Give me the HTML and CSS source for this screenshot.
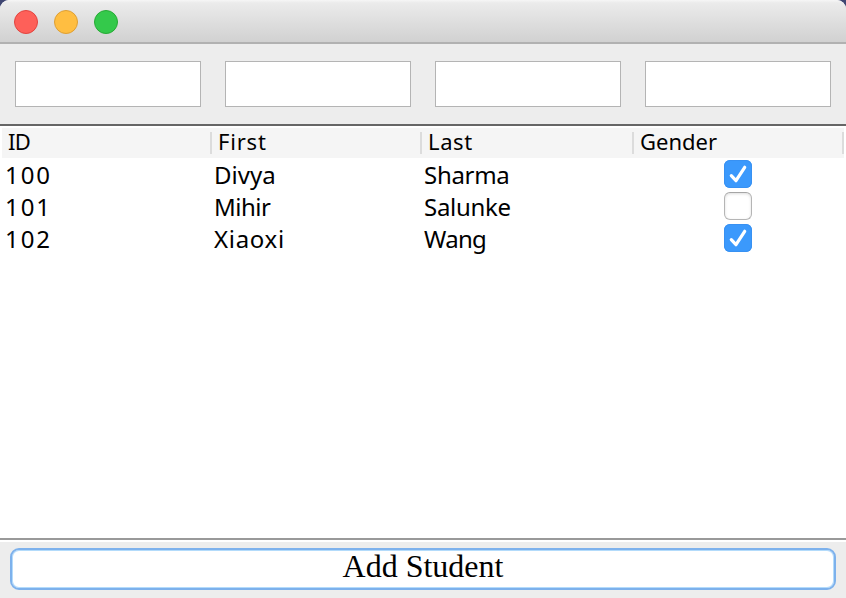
FILE: index.html
```html
<!DOCTYPE html>
<html lang="en">
<head>
<meta charset="utf-8">
<title>Students</title>
<link rel="stylesheet" href="styles.css">
</head>
<body>
<div class="window">
  <header class="titlebar">
    <span class="light close"></span>
    <span class="light minimize"></span>
    <span class="light zoom"></span>
  </header>
  <form class="fields">
    <input type="text"><input type="text"><input type="text"><input type="text">
  </form>
  <main class="table-pane">
    <table>
      <thead>
        <tr><th><span class="h-id">ID</span></th><th><span class="h-first">First</span></th><th><span class="h-last">Last</span></th><th><span>Gender</span></th></tr>
      </thead>
      <tbody>
        <tr>
          <td class="num">100</td><td><span>Divya</span></td><td><span class="tight">Sharma</span></td>
          <td class="check"><span class="box on"><svg viewBox="0 0 28 28"><path d="M7.3 15.7 12 20.7 20.7 7.3"/></svg></span></td>
        </tr>
        <tr>
          <td class="num">101</td><td><span class="mihir">Mihir</span></td><td><span class="tight">Salunke</span></td>
          <td class="check"><span class="box"></span></td>
        </tr>
        <tr>
          <td class="num">102</td><td><span class="xiaoxi">Xiaoxi</span></td><td><span class="wang">Wang</span></td>
          <td class="check"><span class="box on"><svg viewBox="0 0 28 28"><path d="M7.3 15.7 12 20.7 20.7 7.3"/></svg></span></td>
        </tr>
      </tbody>
    </table>
  </main>
  <footer class="actions"><button type="button">Add Student</button></footer>
</div>
</body>
</html>
```
FILE: styles.css
```css
* { box-sizing: border-box; }
body { margin: 0; background: #3f4672; font-family: "Noto Sans", "Lucida Grande", sans-serif; color: #000; }
.window {
  display: flex; flex-direction: column;
  width: 846px; height: 598px; overflow: hidden;
  background: #ededed; border-radius: 9px 9px 0 0;
}
.titlebar {
  display: flex; gap: 16px; flex: none;
  height: 44px; padding: 10px 14px;
  background: linear-gradient(#f6f6f6 0, #ebebeb 3px, #d1d1d1 42px);
  border-bottom: 2px solid #b1b1b1;
}
.light { width: 24px; height: 24px; border-radius: 50%; border: 1px solid; }
.close { background: #fe6059; border-color: #e2443f; }
.minimize { background: #ffbe41; border-color: #de9f34; }
.zoom { background: #34c94b; border-color: #27aa35; }
.fields {
  display: grid; grid-template-columns: repeat(4, 1fr); gap: 24px;
  flex: none; height: 80px; margin: 0; padding: 17px 15px;
}
.fields input {
  width: 100%; height: 46px; margin: 0; padding: 0 8px;
  background: #fff; border: 1px solid #b4b4b4; border-radius: 0; outline: none;
}
.table-pane {
  flex: 1; padding: 2px 2px 0; background: #fff;
  border-top: 2px solid #666; border-bottom: 2px solid #999;
}
table { width: 842px; table-layout: fixed; border-collapse: separate; border-spacing: 0; }
th, td { padding: 0; text-align: left; font-weight: 400; white-space: nowrap; }
th {
  width: 210px; height: 30px; padding: 0 0 4px 6px;
  font-size: 22px; line-height: 26px;
  background: linear-gradient(#dcdcdc, #dcdcdc) right 4px / 2px 22px no-repeat #f5f5f5;
}
th:nth-child(3) { width: 212px; }
th span, td span { display: block; }
.h-id { letter-spacing: -0.6px; }
.h-first { letter-spacing: 0.8px; }
.h-last { letter-spacing: 0.6px; }
td { height: 32px; padding: 2px 0 0 2px; font-size: 24px; line-height: 30px; }
td.num { padding-left: 3px; letter-spacing: 1.9px; }
.tight { letter-spacing: -0.3px; }
.mihir { letter-spacing: -0.5px; }
.wang { letter-spacing: -0.7px; }
.xiaoxi { letter-spacing: 0.7px; }
td.check { padding: 2px 0; vertical-align: top; }
.box {
  width: 28px; height: 28px; margin: 0 0 0 90px; border-radius: 6px;
  background: #fff; border: 1px solid #b5b5b5; border-top-color: #a5a5a5;
  box-shadow: inset 0 1px 3px #ddd;
}
.box.on { background: #3b99fc; border: 0; box-shadow: inset 0 0 0 1px #3891f2; }
.box svg { display: block; fill: none; stroke: #fff; stroke-width: 3.2; stroke-linecap: round; stroke-linejoin: round; }
.actions { flex: none; height: 58px; padding: 6px 10px 8px; border-top: 2px solid #fff; }
.actions button {
  display: block; width: 100%; height: 42px; padding: 0 0 6px;
  background: #fff; border: 2px solid #7db1ec; border-radius: 9px;
  box-shadow: inset 0 0 0 1px #b3dbfb;
  font: 32px/32px "Liberation Serif", "Times New Roman", serif; color: #000;
}
```
